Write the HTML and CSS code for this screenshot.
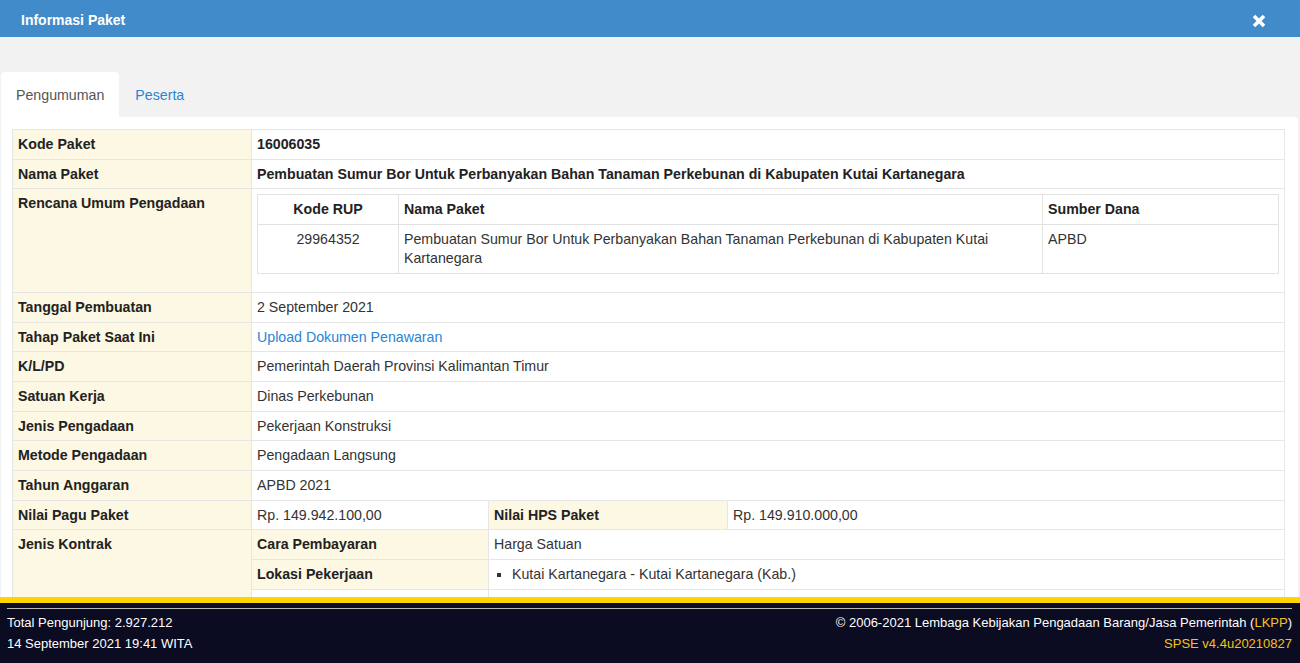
FILE: index.html
```html
<!DOCTYPE html>
<html lang="id">
<head>
<meta charset="utf-8">
<title>Informasi Paket</title>
<link rel="stylesheet" href="styles.css">
</head>
<body>
<div class="modal">
  <div class="modal-header">
    <span class="modal-title">Informasi Paket</span>
    <span class="close" aria-label="Tutup">
      <svg width="14" height="14" viewBox="0 0 14 14"><path d="M2 2 L12 12 M12 2 L2 12" stroke="#fff" stroke-width="3.6" fill="none"/></svg>
    </span>
  </div>
  <div class="modal-body">
    <ul class="tabs">
      <li class="tab active">Pengumuman</li>
      <li class="tab"><a class="link">Peserta</a></li>
    </ul>
    <div class="tab-content">
      <table class="info">
        <colgroup>
          <col class="c-label">
          <col class="c-two">
          <col class="c-three">
          <col>
        </colgroup>
        <tr>
          <th class="label">Kode Paket</th>
          <td colspan="3" class="strong">16006035</td>
        </tr>
        <tr>
          <th class="label">Nama Paket</th>
          <td colspan="3" class="strong">Pembuatan Sumur Bor Untuk Perbanyakan Bahan Tanaman Perkebunan di Kabupaten Kutai Kartanegara</td>
        </tr>
        <tr>
          <th class="label">Rencana Umum Pengadaan</th>
          <td colspan="3" class="nest-cell">
            <table class="rup">
              <colgroup>
                <col class="r-one">
                <col class="r-two">
                <col>
              </colgroup>
              <tr>
                <th class="center">Kode RUP</th>
                <th>Nama Paket</th>
                <th>Sumber Dana</th>
              </tr>
              <tr>
                <td class="center">29964352</td>
                <td>Pembuatan Sumur Bor Untuk Perbanyakan Bahan Tanaman Perkebunan di Kabupaten Kutai Kartanegara</td>
                <td>APBD</td>
              </tr>
            </table>
          </td>
        </tr>
        <tr>
          <th class="label">Tanggal Pembuatan</th>
          <td colspan="3">2 September 2021</td>
        </tr>
        <tr>
          <th class="label">Tahap Paket Saat Ini</th>
          <td colspan="3"><a class="link">Upload Dokumen Penawaran</a></td>
        </tr>
        <tr>
          <th class="label">K/L/PD</th>
          <td colspan="3">Pemerintah Daerah Provinsi Kalimantan Timur</td>
        </tr>
        <tr>
          <th class="label">Satuan Kerja</th>
          <td colspan="3">Dinas Perkebunan</td>
        </tr>
        <tr>
          <th class="label">Jenis Pengadaan</th>
          <td colspan="3">Pekerjaan Konstruksi</td>
        </tr>
        <tr>
          <th class="label">Metode Pengadaan</th>
          <td colspan="3">Pengadaan Langsung</td>
        </tr>
        <tr>
          <th class="label">Tahun Anggaran</th>
          <td colspan="3">APBD 2021</td>
        </tr>
        <tr>
          <th class="label">Nilai Pagu Paket</th>
          <td>Rp. 149.942.100,00</td>
          <th class="label">Nilai HPS Paket</th>
          <td>Rp. 149.910.000,00</td>
        </tr>
        <tr>
          <th class="label" rowspan="3">Jenis Kontrak</th>
          <th class="label">Cara Pembayaran</th>
          <td colspan="2">Harga Satuan</td>
        </tr>
        <tr>
          <th class="label">Lokasi Pekerjaan</th>
          <td colspan="2">
            <ul class="bullets"><li>Kutai Kartanegara - Kutai Kartanegara (Kab.)</li></ul>
          </td>
        </tr>
        <tr class="tail">
          <td></td>
          <td colspan="2"></td>
        </tr>
      </table>
    </div>
  </div>
</div>
<footer class="footer">
  <hr class="footer-rule">
  <div class="footer-row">
    <div class="footer-left">
      <div>Total Pengunjung: 2.927.212</div>
      <div>14 September 2021 19:41 WITA</div>
    </div>
    <div class="footer-right">
      <div>© 2006-2021 Lembaga Kebijakan Pengadaan Barang/Jasa Pemerintah (<span class="gold">LKPP</span>)</div>
      <div class="gold">SPSE v4.4u20210827</div>
    </div>
  </div>
</footer>
</body>
</html>
```
FILE: styles.css
```css
html, body {
  margin: 0;
  height: 100%;
  overflow: hidden;
}
body {
  font-family: "Liberation Sans", Arial, sans-serif;
  font-size: 14px;
  color: #333;
  background: #f2f2f2;
}
.modal-header {
  height: 37px;
  background: #428bca;
  color: #fff;
  display: flex;
  align-items: center;
  justify-content: space-between;
  padding: 0 34px 0 21px;
}
.modal-title {
  font-weight: bold;
  font-size: 14px;
  margin-top: 2px;
}
.close {
  display: flex;
  width: 14px;
  height: 14px;
  margin-top: 4px;
}
.modal-body {
  padding: 35px 2px 0 1px;
}
.tabs {
  list-style: none;
  margin: 0;
  padding: 0;
  display: flex;
}
.tab {
  padding: 13px 15px 12px;
  line-height: 20px;
  font-size: 14.2px;
  border-radius: 4px 4px 0 0;
  margin-right: 1px;
}
.tab.active {
  background: #fff;
  color: #555;
}
.link {
  color: #2a84d6;
  text-decoration: none;
}
.tab-content {
  background: #fff;
  border-radius: 0 4px 0 0;
  padding: 12px 13px 12px 11px;
}
.info {
  width: 100%;
  border-collapse: collapse;
  table-layout: fixed;
  border: 1px solid #e2e2e2;
  font-size: 14.2px;
}
.c-label { width: 239px; }
.c-two { width: 237px; }
.c-three { width: 239px; }
.info > tbody > tr > th,
.info > tbody > tr > td {
  padding: 5px 5px 4.7px;
  line-height: 19px;
  border: 1px solid #e6e6e6;
  vertical-align: top;
  text-align: left;
}
.info > tbody > tr > td.nest-cell {
  padding-bottom: 0;
}
.info th.label {
  background: #fcf8e3;
  font-weight: bold;
  color: #222;
}
.info .tail td {
  height: 30px;
}
.strong {
  font-weight: bold;
  color: #222;
}
.rup {
  width: 100%;
  border-collapse: collapse;
  table-layout: fixed;
  margin-bottom: 18px;
  border: 1px solid #ddd;
}
.r-one { width: 141px; }
.r-two { width: 644px; }
.rup th,
.rup td {
  padding: 5px 5px 4.5px;
  line-height: 19.2px;
  border: 1px solid #e2e2e2;
  text-align: left;
  vertical-align: top;
}
.rup th {
  font-weight: bold;
  color: #222;
}
.rup .center {
  text-align: center;
}
.bullets {
  margin: 0;
  padding-left: 18px;
  list-style: square;
}
.footer {
  position: fixed;
  left: 0;
  right: 0;
  bottom: 0;
  height: 60px;
  border-top: 6px solid #ffd400;
  background: #0b0b22;
  color: #fff;
  font-size: 13px;
  padding: 0 8px 0 7px;
}
.footer-rule {
  margin: 5px 0 3px;
  border: 0;
  border-top: 1px solid #bbb;
  height: 0;
}
.footer-row {
  display: flex;
  justify-content: space-between;
  line-height: 21px;
}
.footer-right {
  text-align: right;
}
.gold {
  color: #f5c21b;
}
```
